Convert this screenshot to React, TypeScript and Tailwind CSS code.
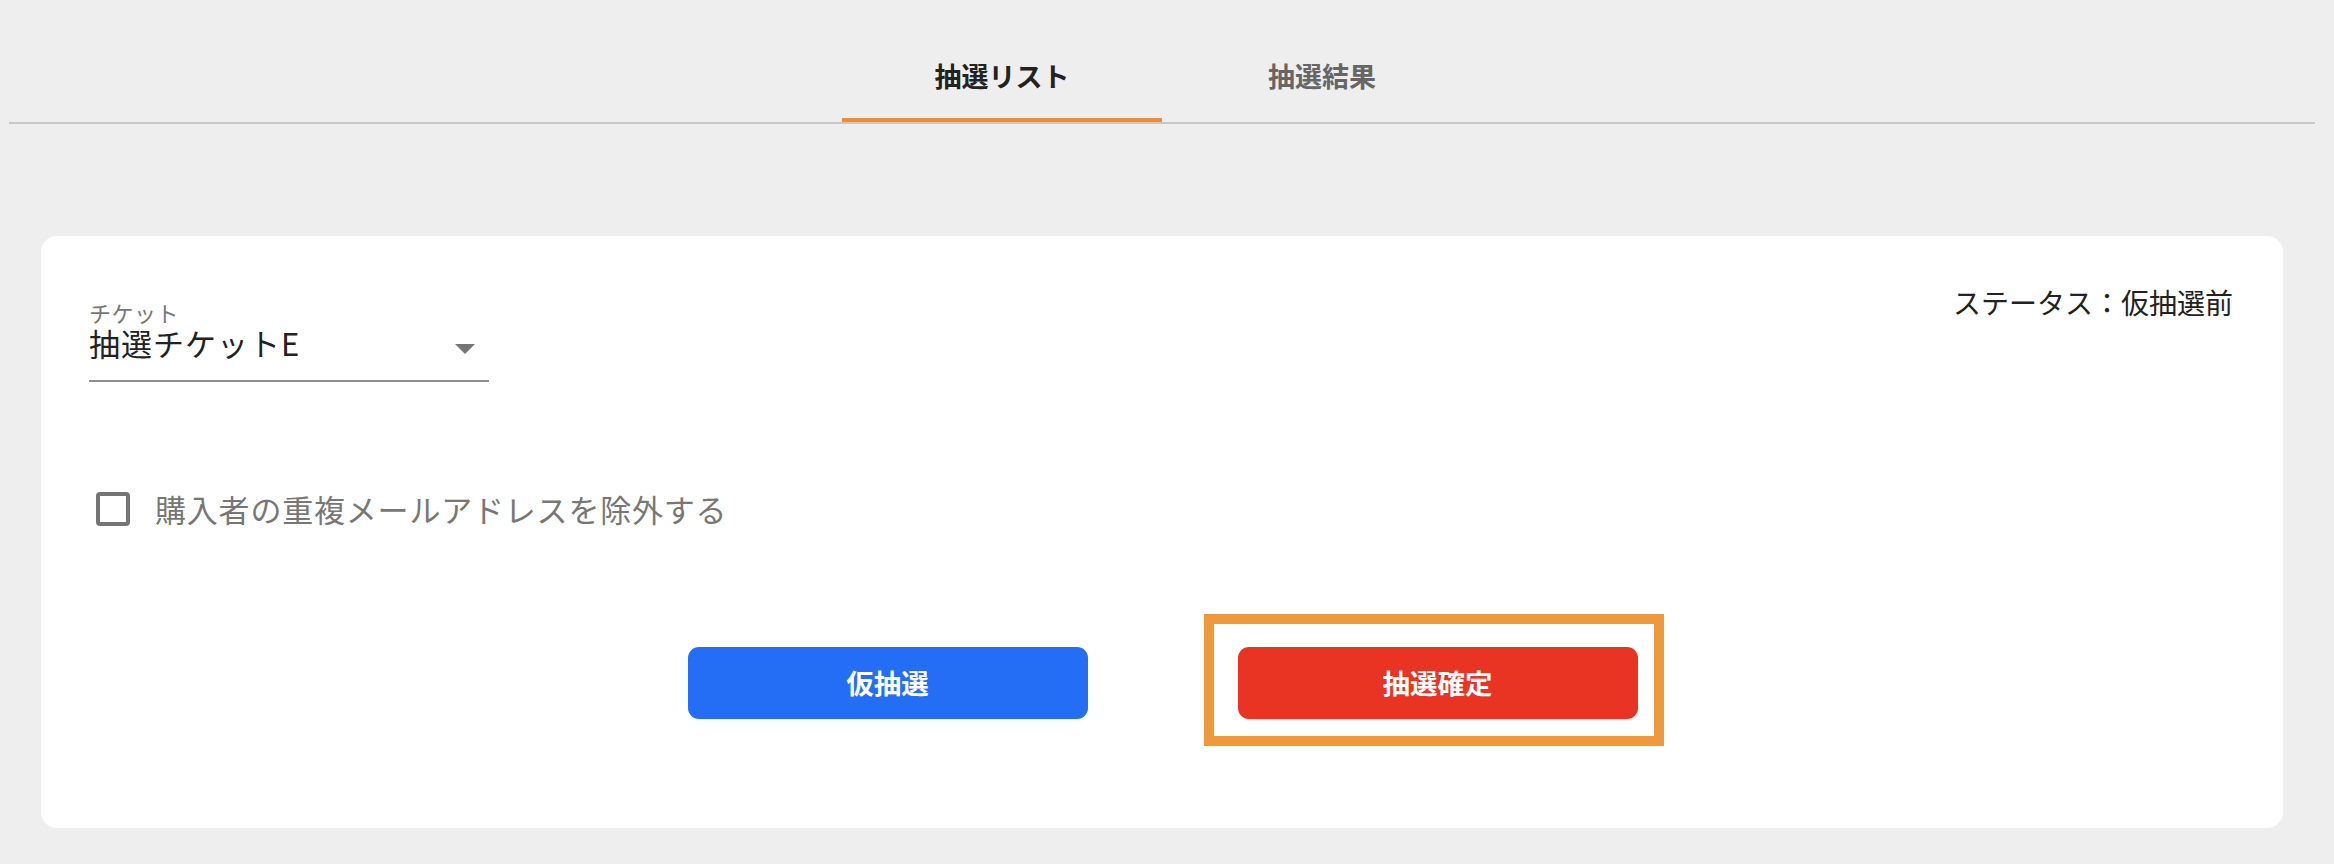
import React from "react";

export default function App() {
  return (
    <div
      className="w-full h-[864px] bg-[#eeeeee] overflow-hidden"
      style={{ fontFamily: '"Noto Sans CJK JP", "Noto Sans", sans-serif' }}
    >
      {/* Tabs */}
      <div className="ml-[9px] w-[2306px] pt-[28px] border-b-2 border-[#c8c8c8] flex justify-center">
        <div className="w-[320px] h-[94px] flex items-center justify-center border-b-4 border-[#f08c35] text-[27px] font-bold text-[#222222] leading-none">
          <span className="mt-[4px]">抽選リスト</span>
        </div>
        <div className="w-[320px] h-[94px] flex items-center justify-center border-b-4 border-transparent text-[27px] font-bold text-[#666666] leading-none">
          <span className="mt-[4px]">抽選結果</span>
        </div>
      </div>

      {/* Card */}
      <div className="mt-[112px] ml-[41px] w-[2242px] h-[592px] bg-white rounded-[16px] pt-[53px] pl-[48px] pr-[50px] flex flex-col">
        <div className="flex justify-between items-start">
          <div className="mt-[12px] w-[400px] flex flex-col">
            <div className="text-[22px] leading-none text-[#777777] tracking-[0.5px]">チケット</div>
            <div className="mt-[4px] flex items-start justify-between pb-[22px] border-b-2 border-[#8f8f8f]">
              <span className="text-[31px] leading-none text-[#222222] tracking-[1px]">抽選チケットE</span>
              <svg width="20" height="10" viewBox="0 0 20 10" className="mt-[17px] mr-[14px]">
                <path d="M0 0 L20 0 L10 10 Z" fill="#757575" />
              </svg>
            </div>
          </div>
          <div className="text-[28px] leading-none text-[#222222] -mt-[1px]">ステータス：仮抽選前</div>
        </div>

        <div className="mt-[110px] ml-[7px] flex items-center">
          <div className="w-[34px] h-[34px] border-4 border-[#757575] rounded-[4px]" />
          <span className="ml-[25px] text-[31px] leading-none text-[#777777] tracking-[0.8px] -mt-[2px]">
            購入者の重複メールアドレスを除外する
          </span>
        </div>

        <div className="mt-[121px] flex justify-center gap-[150px] -ml-[48px] -mr-[50px] pl-[1px]">
          <button className="w-[400px] h-[72px] rounded-[11px] bg-[#246ef5] text-white text-[27.5px] font-bold leading-none flex items-center justify-center">
            仮抽選
          </button>
          <div className="relative">
            <button className="w-[400px] h-[72px] rounded-[11px] bg-[#e93323] text-white text-[27.5px] font-bold leading-none flex items-center justify-center">
              抽選確定
            </button>
            <div className="absolute left-[-34px] top-[-33px] w-[460px] h-[132px] border-[10px] border-[#f0993a] pointer-events-none" />
          </div>
        </div>
      </div>
    </div>
  );
}
